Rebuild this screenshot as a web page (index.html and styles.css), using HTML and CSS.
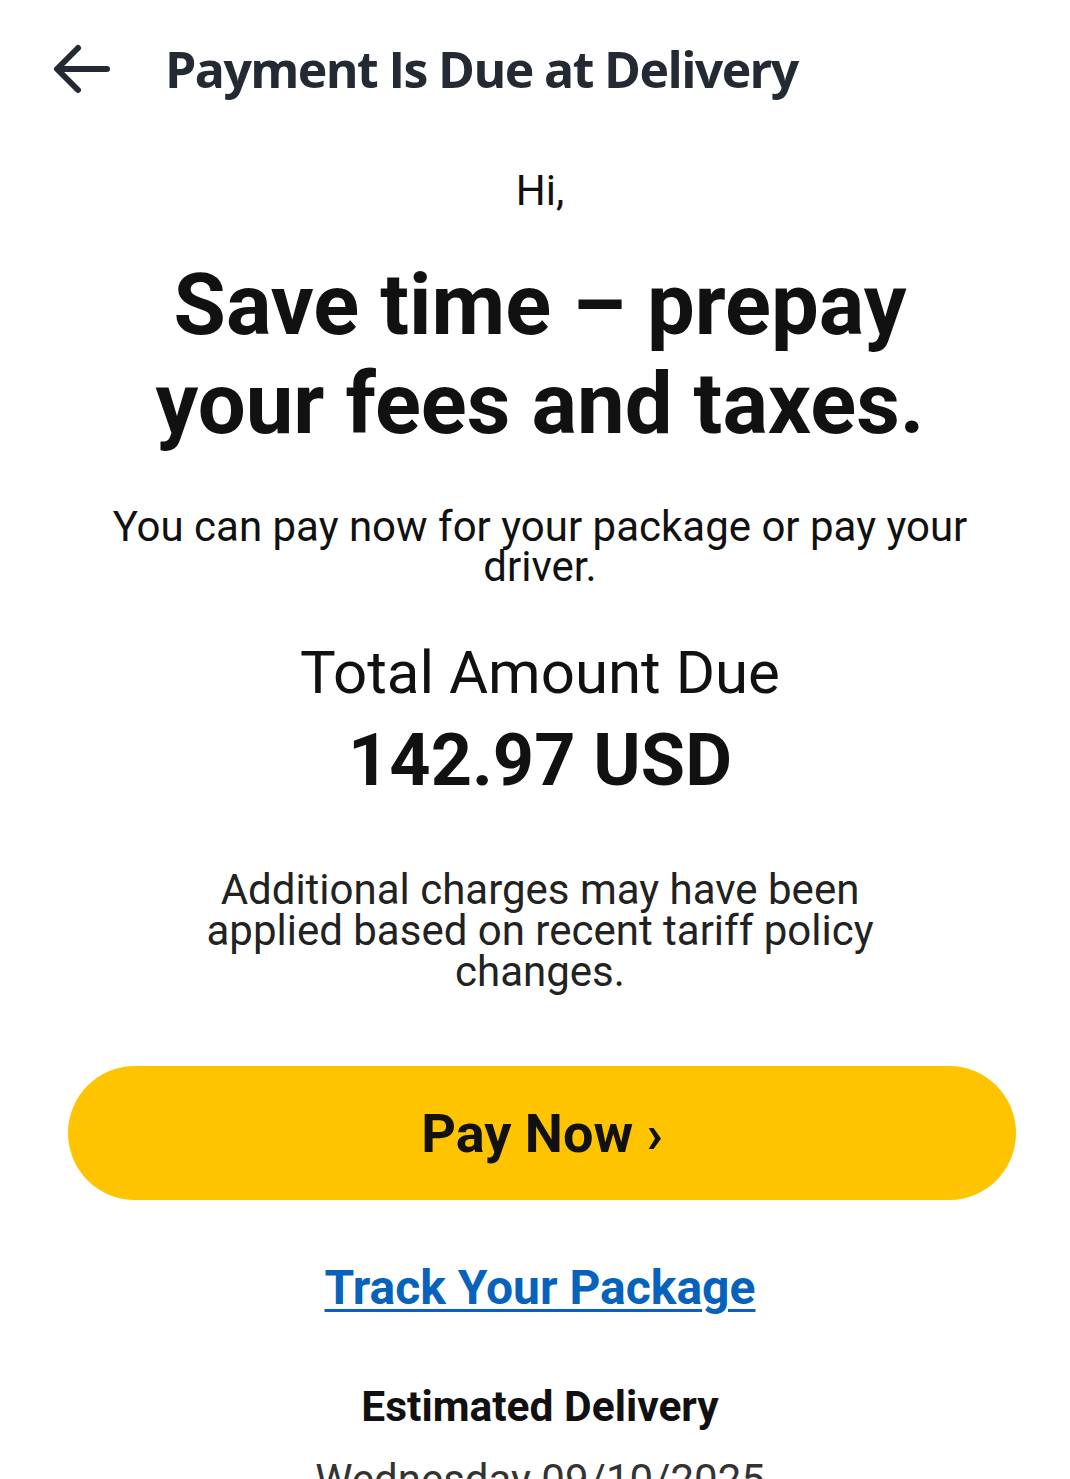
FILE: index.html
```html
<!DOCTYPE html>
<html lang="en">
<head>
<meta charset="utf-8">
<title>Payment Is Due at Delivery</title>
<link rel="stylesheet" href="styles.css">
</head>
<body>
<header class="topbar">
  <svg class="back" width="58" height="50" viewBox="0 0 58 50" aria-hidden="true">
    <path d="M54 25 H5 M25 4 L4 25 L25 46" fill="none" stroke="#232a33" stroke-width="6" stroke-linecap="round" stroke-linejoin="round"/>
  </svg>
  <h1 class="subject">Payment Is Due at Delivery</h1>
</header>
<main class="mail">
  <p class="greet">Hi,</p>
  <h2 class="headline">Save time – prepay your fees and taxes.</h2>
  <p class="intro">You can pay now for your package or pay your driver.</p>
  <p class="total-label">Total Amount Due</p>
  <p class="total-value">142.97 USD</p>
  <p class="note">Additional charges may have been applied based on recent tariff policy changes.</p>
  <a class="pay-btn" href="#">Pay Now ›</a>
  <a class="track" href="#">Track Your Package</a>
  <p class="est-label">Estimated Delivery</p>
  <p class="est-date">Wednesday 09/10/2025</p>
</main>
</body>
</html>
```
FILE: styles.css
```css
html, body {
  margin: 0;
  padding: 0;
  background: #ffffff;
}
body {
  font-family: Roboto, "Liberation Sans", sans-serif;
  color: #111111;
  overflow: hidden;
}
.topbar {
  display: flex;
  align-items: center;
  gap: 54px;
  padding: 35px 0 0 53px;
  height: 68px;
}
.back {
  display: block;
  flex: none;
}
.subject {
  margin: 0;
  font-family: "Open Sans", "Noto Sans", sans-serif;
  font-weight: 700;
  font-size: 50px;
  line-height: 68px;
  color: #232a33;
  letter-spacing: -1.6px;
}
.mail {
  display: flex;
  flex-direction: column;
  align-items: center;
  padding-left: 10px;
  text-align: center;
}
.mail p, .mail h2 {
  margin: 0;
}
.greet {
  margin-top: 63px !important;
  font-size: 42px;
  line-height: 50px;
}
.headline {
  margin-top: 40px !important;
  max-width: 800px;
  font-size: 85px;
  line-height: 99px;
  font-weight: 700;
}
.intro {
  margin-top: 53px !important;
  max-width: 880px;
  font-size: 42px;
  line-height: 40px;
}
.total-label {
  margin-top: 50px !important;
  font-size: 60px;
  line-height: 72px;
}
.total-value {
  margin-top: 10px !important;
  font-size: 72px;
  line-height: 84px;
  font-weight: 700;
}
.note {
  margin-top: 66px !important;
  max-width: 690px;
  font-size: 42px;
  line-height: 41px;
  color: #222222;
}
.pay-btn {
  align-self: stretch;
  margin: 74px 54px 0 58px;
  height: 134px;
  border-radius: 67px;
  background: #ffc400;
  color: #111111;
  text-decoration: none;
  font-weight: 700;
  font-size: 54px;
  display: flex;
  align-items: center;
  justify-content: center;
}
.track {
  margin-top: 60px;
  font-size: 48px;
  line-height: 56px;
  font-weight: 700;
  color: #0662bb;
  text-decoration: underline;
  text-decoration-thickness: 3px;
  text-underline-offset: 5px;
}
.est-label {
  margin-top: 66px !important;
  font-size: 42.5px;
  line-height: 50px;
  font-weight: 700;
}
.est-date {
  margin-top: 23px !important;
  font-size: 42px;
  line-height: 50px;
  color: #333333;
}
```
